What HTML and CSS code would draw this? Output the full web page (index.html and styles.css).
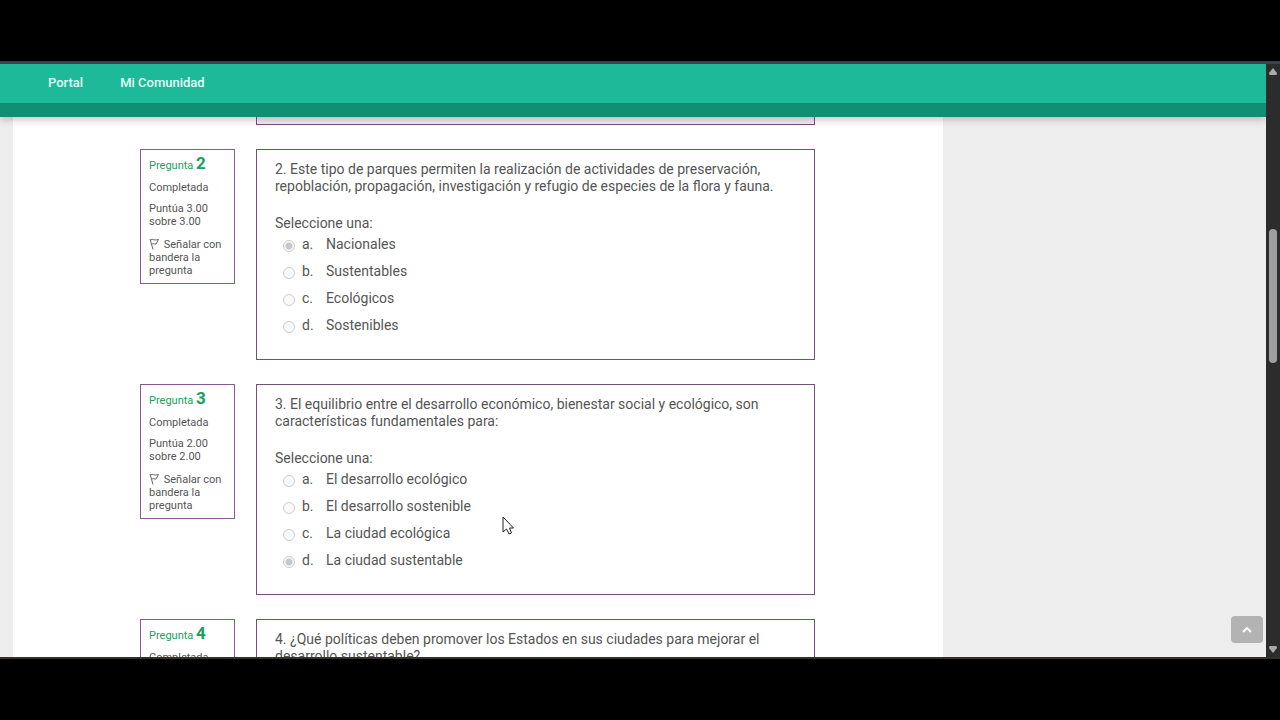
FILE: index.html
```html
<!DOCTYPE html>
<html lang="es">
<head>
    <meta charset="UTF-8" />
    <meta name="viewport" content="width=device-width, initial-scale=1" />
    <title>Mi Comunidad</title>
    <link rel="stylesheet" href="styles.css">
</head>
<body>
    <div class="window">
        <div class="page">
            <header class="header">
                <nav class="nav">
                    <a href="#">Portal</a>
                    <a href="#">Mi Comunidad</a>
                </nav>
            </header>

            <div class="columns">
                <main class="quiz">
                    <div class="content previous"></div>

                    <section class="question">
                        <div class="info">
                            <h3>Pregunta <span>2</span></h3>
                            <p>Completada</p>
                            <p>Puntúa 3.00 <br/>sobre 3.00</p>
                            <p class="mark"><svg class="flag" viewBox="0 0 10 12"><path d="M1 1 L4 11.500 M1.500 2 C4 .5 5 3 9.500 1.500 L7 6 C5.500 6.500 5 5 3 6" /></svg> <a href="#">Señalar con bandera la pregunta</a></p>
                        </div>
                        <form class="content">
                            <p class="text">2. Este tipo de parques permiten la realización de actividades de preservación, repoblación, propagación, investigación y refugio de especies de la flora y fauna.</p>
                            <fieldset disabled>
                                <legend>Seleccione una:</legend>
                                <label><input type="radio" name="q2" checked /><span class="letter">a.</span>Nacionales</label>
                                <label><input type="radio" name="q2" /><span class="letter">b.</span>Sustentables</label>
                                <label><input type="radio" name="q2" /><span class="letter">c.</span>Ecológicos</label>
                                <label><input type="radio" name="q2" /><span class="letter">d.</span>Sostenibles</label>
                            </fieldset>
                        </form>
                    </section>

                    <section class="question">
                        <div class="info">
                            <h3>Pregunta <span>3</span></h3>
                            <p>Completada</p>
                            <p>Puntúa 2.00 <br/>sobre 2.00</p>
                            <p class="mark"><svg class="flag" viewBox="0 0 10 12"><path d="M1 1 L4 11.500 M1.500 2 C4 .5 5 3 9.500 1.500 L7 6 C5.500 6.500 5 5 3 6" /></svg> <a href="#">Señalar con bandera la pregunta</a></p>
                        </div>
                        <form class="content">
                            <p class="text">3. El equilibrio entre el desarrollo económico, bienestar social y ecológico, son características fundamentales para:</p>
                            <fieldset disabled>
                                <legend>Seleccione una:</legend>
                                <label><input type="radio" name="q3" /><span class="letter">a.</span>El desarrollo ecológico</label>
                                <label><input type="radio" name="q3" /><span class="letter">b.</span>El desarrollo sostenible</label>
                                <label><input type="radio" name="q3" /><span class="letter">c.</span>La ciudad ecológica</label>
                                <label><input type="radio" name="q3" checked /><span class="letter">d.</span>La ciudad sustentable</label>
                            </fieldset>
                        </form>
                    </section>

                    <section class="question">
                        <div class="info">
                            <h3>Pregunta <span>4</span></h3>
                            <p>Completada</p>
                        </div>
                        <form class="content">
                            <p class="text">4. ¿Qué políticas deben promover los Estados en sus ciudades para mejorar el desarrollo sustentable?</p>
                        </form>
                    </section>
                </main>
            </div>

            <button class="to-top" type="button" aria-label="Subir">
                <svg viewBox="0 0 10 6"><path d="M1 5 L5 1 L9 5" /></svg>
            </button>
            <svg class="cursor" viewBox="0 0 12 19"><path d="M1 1 V16 L4.500 13 L7 18 L9.500 17 L7.500 12 H11.500 Z" /></svg>
        </div>

        <div class="scrollbar">
            <svg viewBox="0 0 8 7"><path d="M4 0 L8 5 Q8 7 7 7 H1 Q0 7 0 5 Z" /></svg>
            <div class="track"><div class="thumb"></div></div>
            <svg viewBox="0 0 8 7"><path d="M4 7 L8 2 Q8 0 7 0 H1 Q0 0 0 2 Z" /></svg>
        </div>
    </div>
</body>
</html>
```

FILE: styles.css
```css
* {
    box-sizing: border-box;
    margin: 0;
    padding: 0;
}

body {
    height: 100vh;
    padding: 61px 0;
    background: #000;
    font-family: Roboto, "Liberation Sans", sans-serif;
    font-size: 14px;
    line-height: 17px;
    color: #555;
    overflow: hidden;
}

a {
    color: inherit;
    text-decoration: none;
}

.window {
    display: flex;
    height: 100%;
    border-top: 3px solid #37424a;
    border-bottom: 2px solid #33312a;
}

.page {
    position: relative;
    display: flex;
    flex-direction: column;
    flex: 1;
    background: #eee;
    overflow: hidden;
}

.header {
    position: relative;
    z-index: 1;
    flex-shrink: 0;
    background: #1db998;
    border-bottom: 14px solid #0f8f73;
    box-shadow: 0 2px 8px rgba(60, 30, 50, 0.3);
}

.nav {
    display: flex;
    gap: 37px;
    padding: 10px 48px 12px;
    color: #e4fff8;
    font-size: 13px;
    font-weight: 500;
}

.columns {
    flex: 1;
    min-height: 0;
    padding-left: 13px;
}

.quiz {
    max-width: 930px;
    min-height: 100%;
    padding: 0 128px 0 127px;
    background: #fff;
}

.question {
    display: flex;
    align-items: flex-start;
    gap: 21px;
    margin-top: 24px;
}

.info {
    flex: 0 0 95px;
    padding: 6px 8px;
    border: 1px solid #8a5a94;
    font-size: 11px;
    line-height: 13px;
}

.info h3 {
    font-size: 11px;
    font-weight: 400;
    line-height: 15px;
    color: #1a9e60;
}

.info h3 span {
    font-size: 17px;
    font-weight: 700;
}

.info p {
    margin-top: 8px;
}

.info .mark {
    margin-top: 10px;
}

.flag {
    width: 10px;
    height: 12px;
    margin-right: 2px;
    vertical-align: -2px;
    fill: none;
    stroke: #666;
}

.content {
    flex: 1;
    padding: 11px 18px 25px;
    border: 1px solid #74507a;
}

.previous {
    height: 8px;
    margin-left: 116px;
    padding: 0;
    border-top: 0;
    background: #eee;
}

.text {
    margin-bottom: 20px;
}

fieldset {
    border: 0;
}

legend {
    margin-bottom: 4px;
}

label {
    display: flex;
    align-items: center;
    margin-bottom: 10px;
}

label:last-child {
    margin-bottom: 0;
}

input[type="radio"] {
    appearance: none;
    width: 12px;
    height: 12px;
    margin: 3px 7px 0 8px;
    border: 1px solid #ccc;
    border-radius: 50%;
    background: #fafafa;
}

input[type="radio"]:checked {
    background: radial-gradient(circle, #c8c8c8 3px, #f8f8f8 4px);
}

.letter {
    width: 24px;
}

.to-top {
    position: absolute;
    right: 3px;
    bottom: 14px;
    display: flex;
    align-items: center;
    justify-content: center;
    width: 32px;
    height: 27px;
    border: 0;
    border-radius: 4px;
    background: #b3b3b3;
}

.to-top svg {
    width: 10px;
    height: 6px;
    fill: none;
    stroke: #fff;
    stroke-width: 2;
}

.cursor {
    position: absolute;
    left: 502px;
    top: 452px;
    width: 12px;
    height: 19px;
    fill: #fff;
    stroke: #222;
}

.scrollbar {
    display: flex;
    flex-direction: column;
    align-items: center;
    flex: 0 0 14px;
    padding: 4px 0;
    background: #2c2c2c;
}

.scrollbar svg {
    width: 8px;
    height: 7px;
    fill: #aaa;
}

.track {
    flex: 1;
    padding-top: 154px;
}

.thumb {
    width: 8px;
    height: 134px;
    border-radius: 4px;
    background: #9f9f9f;
}
```
